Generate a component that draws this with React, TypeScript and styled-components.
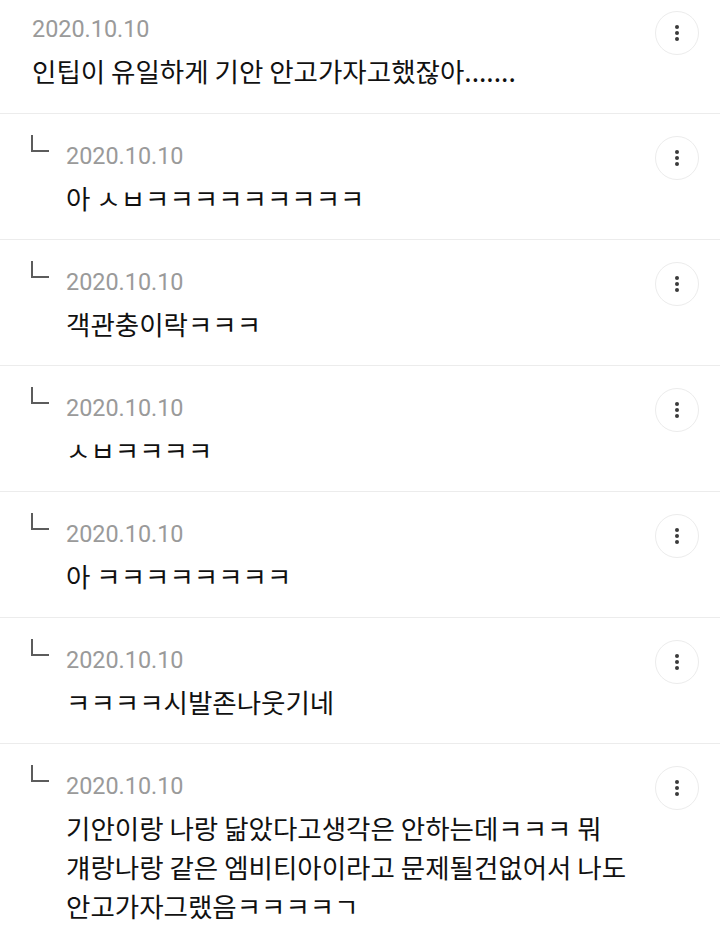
import React from 'react';
import styled, { createGlobalStyle } from 'styled-components';

const GlobalStyle = createGlobalStyle`
  html, body {
    margin: 0;
    padding: 0;
    background: #fff;
  }
  body {
    font-family: Roboto, "Noto Sans CJK KR", sans-serif;
  }
`;

interface CommentData {
  date: string;
  lines: string[];
  reply?: boolean;
}

const comments: CommentData[] = [
  { date: '2020.10.10', lines: ['인팁이 유일하게 기안 안고가자고했잖아.......'] },
  { date: '2020.10.10', lines: ['아 ㅅㅂㅋㅋㅋㅋㅋㅋㅋㅋㅋ'], reply: true },
  { date: '2020.10.10', lines: ['객관충이락ㅋㅋㅋ'], reply: true },
  { date: '2020.10.10', lines: ['ㅅㅂㅋㅋㅋㅋ'], reply: true },
  { date: '2020.10.10', lines: ['아 ㅋㅋㅋㅋㅋㅋㅋㅋ'], reply: true },
  { date: '2020.10.10', lines: ['ㅋㅋㅋㅋ시발존나웃기네'], reply: true },
  {
    date: '2020.10.10',
    lines: [
      '기안이랑 나랑 닮았다고생각은 안하는데ㅋㅋㅋ 뭐',
      '걔랑나랑 같은 엠비티아이라고 문제될건없어서 나도',
      '안고가자그랬음ㅋㅋㅋㅋㄱ',
    ],
    reply: true,
  },
];

const App: React.FC = () => {
  return (
    <>
      <GlobalStyle />
      <List>
        {comments.map((c, i) => (
          <Item key={i} $reply={!!c.reply}>
            {c.reply && (
              <Corner>
                <svg width="20" height="18" viewBox="0 0 20 18">
                  <path d="M2 0 V16 H19" fill="none" stroke="#5c5c5c" strokeWidth="2" />
                </svg>
              </Corner>
            )}
            <Content>
              <DateText>{c.date}</DateText>
              <Body>
                {c.lines.map((l, j) => (
                  <div key={j}>{l}</div>
                ))}
              </Body>
            </Content>
            <MoreButton aria-label="more" $reply={!!c.reply}>
              <svg width="6" height="20" viewBox="0 0 6 20">
                <circle cx="3" cy="4" r="2" fill="#3a3a3a" />
                <circle cx="3" cy="10" r="2" fill="#3a3a3a" />
                <circle cx="3" cy="16" r="2" fill="#3a3a3a" />
              </svg>
            </MoreButton>
          </Item>
        ))}
      </List>
    </>
  );
};

const List = styled.div`
  width: 720px;
  display: flex;
  flex-direction: column;
`;

const Item = styled.div<{ $reply: boolean }>`
  display: flex;
  align-items: flex-start;
  padding: ${({ $reply }) => ($reply ? '26px 21px 22px 30px' : '13px 21px 23px 32px')};
  border-bottom: 1px solid #ececec;

  &:last-child {
    border-bottom: none;
  }
`;

const Corner = styled.div`
  width: 36px;
  flex-shrink: 0;
  margin-top: -5px;
  display: flex;
`;

const Content = styled.div`
  flex: 1;
  display: flex;
  flex-direction: column;
  gap: 6px;
  min-width: 0;
`;

const DateText = styled.div`
  font-family: Roboto, sans-serif;
  font-size: 23.4px;
  line-height: 32px;
  color: #9a9a9a;
`;

const Body = styled.div`
  font-family: "Noto Sans CJK KR", sans-serif;
  font-size: 26.5px;
  line-height: 39px;
  color: #111;
`;

const MoreButton = styled.button<{ $reply: boolean }>`
  width: 44px;
  height: 44px;
  flex-shrink: 0;
  border-radius: 50%;
  border: 1px solid #ececec;
  background: #fff;
  display: flex;
  align-items: center;
  justify-content: center;
  padding: 0;
  margin-top: ${({ $reply }) => ($reply ? '-4px' : '-2px')};
`;

export default App;
